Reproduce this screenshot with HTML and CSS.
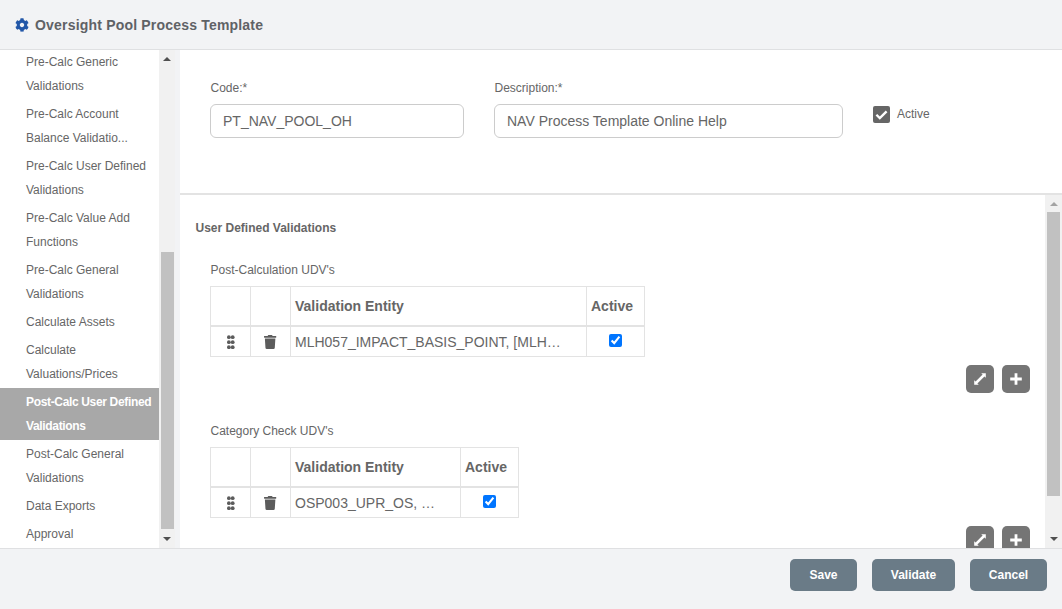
FILE: index.html
```html
<!DOCTYPE html>
<html lang="en">
<head>
<meta charset="utf-8">
<title>Oversight Pool Process Template</title>
<link rel="stylesheet" href="styles.css">
</head>
<body>
<div class="app">
  <header class="header">
    <svg class="gear" viewBox="0 0 512 512"><path d="M487.4 315.7l-42.6-24.6c4.3-23.2 4.3-47 0-70.2l42.6-24.6c4.9-2.8 7.1-8.6 5.5-14-11.1-35.6-30-67.8-54.7-94.6-3.8-4.1-10-5.1-14.8-2.3L380.8 110c-17.9-15.4-38.5-27.3-60.8-35.1V25.8c0-5.6-3.9-10.5-9.4-11.7-36.7-8.2-74.3-7.8-109.2 0-5.5 1.2-9.4 6.1-9.4 11.7V75c-22.2 7.9-42.8 19.8-60.8 35.1L88.7 85.5c-4.9-2.8-11-1.9-14.8 2.3-24.7 26.7-43.6 58.9-54.7 94.6-1.7 5.4.6 11.2 5.5 14L67.3 221c-4.3 23.2-4.3 47 0 70.2l-42.6 24.6c-4.9 2.8-7.1 8.6-5.5 14 11.1 35.6 30 67.8 54.7 94.6 3.8 4.1 10 5.1 14.8 2.3l42.6-24.6c17.9 15.4 38.5 27.3 60.8 35.1v49.2c0 5.6 3.9 10.5 9.4 11.7 36.7 8.2 74.3 7.8 109.2 0 5.5-1.2 9.4-6.1 9.4-11.7v-49.2c22.2-7.9 42.8-19.8 60.8-35.1l42.6 24.6c4.9 2.8 11 1.9 14.8-2.3 24.7-26.7 43.6-58.9 54.7-94.6 1.5-5.5-.7-11.3-5.6-14.1zM256 336c-44.1 0-80-35.9-80-80s35.9-80 80-80 80 35.9 80 80-35.9 80-80 80z"/></svg>
    <h1 class="title">Oversight Pool Process Template</h1>
  </header>
  <div class="middle">
    <aside class="sidebar">
      <nav class="nav">
        <ul class="nav-list">
          <li class="nav-item">Pre-Calc Generic<br>Validations</li>
          <li class="nav-item">Pre-Calc Account<br>Balance Validatio...</li>
          <li class="nav-item">Pre-Calc User Defined<br>Validations</li>
          <li class="nav-item">Pre-Calc Value Add<br>Functions</li>
          <li class="nav-item">Pre-Calc General<br>Validations</li>
          <li class="nav-item">Calculate Assets</li>
          <li class="nav-item">Calculate<br>Valuations/Prices</li>
          <li class="nav-item selected">Post-Calc User Defined<br>Validations</li>
          <li class="nav-item">Post-Calc General<br>Validations</li>
          <li class="nav-item">Data Exports</li>
          <li class="nav-item">Approval</li>
        </ul>
      </nav>
      <div class="scrollbar nav-scroll">
        <span class="arrow up dark"></span>
        <span class="thumb"></span>
        <span class="arrow down dark"></span>
      </div>
    </aside>
    <main class="main">
      <section class="form">
        <div class="field code">
          <label class="label">Code:*</label>
          <input class="input" type="text" value="PT_NAV_POOL_OH">
        </div>
        <div class="field desc">
          <label class="label">Description:*</label>
          <input class="input" type="text" value="NAV Process Template Online Help">
        </div>
        <div class="active-check">
          <span class="check-box"><svg viewBox="0 0 16 16"><path d="M3.2 8.2l3.2 3.2 6.4-6.4" fill="none" stroke="#fff" stroke-width="2.2"/></svg></span>
          <span class="active-text">Active</span>
        </div>
      </section>
      <section class="lower">
        <div class="lower-content">
          <h2 class="section-title">User Defined Validations</h2>

          <h3 class="group-title">Post-Calculation UDV's</h3>
          <table class="grid grid-a">
            <thead><tr><th class="icol"></th><th class="icol"></th><th class="entity">Validation Entity</th><th class="act">Active</th></tr></thead>
            <tbody><tr>
              <td class="ic"><svg class="drag" viewBox="0 0 7.6 14.4"><circle cx="1.9" cy="2.2" r="1.9"/><circle cx="5.7" cy="2.2" r="1.9"/><circle cx="1.9" cy="7.2" r="1.9"/><circle cx="5.7" cy="7.2" r="1.9"/><circle cx="1.9" cy="12.2" r="1.9"/><circle cx="5.7" cy="12.2" r="1.9"/></svg></td>
              <td class="ic"><svg class="trash" viewBox="0 0 448 512"><path d="M432 32H312l-9.4-18.7A24 24 0 0 0 281.1 0H166.8a23.72 23.72 0 0 0-21.4 13.3L136 32H16A16 16 0 0 0 0 48v32a16 16 0 0 0 16 16h416a16 16 0 0 0 16-16V48a16 16 0 0 0-16-16zM53.2 467a48 48 0 0 0 47.9 45h245.8a48 48 0 0 0 47.9-45L416 128H32z"/></svg></td>
              <td class="val">MLH057_IMPACT_BASIS_POINT, [MLH…</td>
              <td class="ck"><input type="checkbox" checked></td>
            </tr></tbody>
          </table>
          <div class="tools">
            <button class="tool"><svg viewBox="0 0 14 14"><path d="M8.2 1.2h4.6v4.6l-1.4-1.4-7 7 1.4 1.4H1.2V8.2l1.4 1.4 7-7z"/></svg></button>
            <button class="tool"><svg viewBox="0 0 14 14"><path d="M5.6 1.2h2.8v4.4h4.4v2.8H8.4v4.4H5.6V8.4H1.2V5.6h4.4z"/></svg></button>
          </div>

          <h3 class="group-title second">Category Check UDV's</h3>
          <table class="grid grid-b">
            <thead><tr><th class="icol"></th><th class="icol"></th><th class="entity">Validation Entity</th><th class="act">Active</th></tr></thead>
            <tbody><tr>
              <td class="ic"><svg class="drag" viewBox="0 0 7.6 14.4"><circle cx="1.9" cy="2.2" r="1.9"/><circle cx="5.7" cy="2.2" r="1.9"/><circle cx="1.9" cy="7.2" r="1.9"/><circle cx="5.7" cy="7.2" r="1.9"/><circle cx="1.9" cy="12.2" r="1.9"/><circle cx="5.7" cy="12.2" r="1.9"/></svg></td>
              <td class="ic"><svg class="trash" viewBox="0 0 448 512"><path d="M432 32H312l-9.4-18.7A24 24 0 0 0 281.1 0H166.8a23.72 23.72 0 0 0-21.4 13.3L136 32H16A16 16 0 0 0 0 48v32a16 16 0 0 0 16 16h416a16 16 0 0 0 16-16V48a16 16 0 0 0-16-16zM53.2 467a48 48 0 0 0 47.9 45h245.8a48 48 0 0 0 47.9-45L416 128H32z"/></svg></td>
              <td class="val">OSP003_UPR_OS, …</td>
              <td class="ck"><input type="checkbox" checked></td>
            </tr></tbody>
          </table>
          <div class="tools">
            <button class="tool"><svg viewBox="0 0 14 14"><path d="M8.2 1.2h4.6v4.6l-1.4-1.4-7 7 1.4 1.4H1.2V8.2l1.4 1.4 7-7z"/></svg></button>
            <button class="tool"><svg viewBox="0 0 14 14"><path d="M5.6 1.2h2.8v4.4h4.4v2.8H8.4v4.4H5.6V8.4H1.2V5.6h4.4z"/></svg></button>
          </div>
        </div>
        <div class="scrollbar main-scroll">
          <span class="arrow up light"></span>
          <span class="thumb"></span>
          <span class="arrow down dark"></span>
        </div>
      </section>
    </main>
  </div>
  <footer class="footer">
    <button class="btn">Save</button>
    <button class="btn">Validate</button>
    <button class="btn">Cancel</button>
  </footer>
</div>
</body>
</html>
```
FILE: styles.css
```css
* { box-sizing: border-box; }
html, body { margin: 0; padding: 0; height: 100%; overflow: hidden; }
body { font-family: "Liberation Sans", Arial, sans-serif; color: #666; background: #fff; }
.app { display: flex; flex-direction: column; width: 1062px; height: 609px; }

.header { flex: 0 0 50px; display: flex; align-items: center; gap: 6px; padding-left: 15px; background: #f2f3f5; border-bottom: 1px solid #dfe0e2; }
.gear { width: 14px; height: 14px; fill: #2257a8; }
.title { margin: 0; font-size: 14px; font-weight: 700; color: #5f6266; letter-spacing: .19px; }

.middle { flex: 1; display: flex; min-height: 0; }
.sidebar { flex: 0 0 180px; display: flex; background: #f2f3f5; padding-right: 5px; }
.nav { width: 159px; background: #fff; overflow: hidden; }
.nav-list { list-style: none; margin: -2px 0 0; padding: 0; }
.nav-item { padding: 2px 0 2px 26px; font-size: 12px; line-height: 24px; color: #666; white-space: nowrap; }
.nav-item.selected { background: #a8a8a8; color: #fff; font-weight: 700; letter-spacing: -.34px; }

.scrollbar { flex: 0 0 auto; display: flex; flex-direction: column; align-items: center; background: #f1f1f1; position: relative; }
.nav-scroll { width: 16px; }
.main-scroll { width: 17px; }
.thumb { display: block; background: #c1c1c1; }
.nav-scroll .thumb { width: 13px; height: 277px; margin-top: 191px; }
.main-scroll .thumb { width: 13px; height: 284px; margin-top: 6px; }
.arrow { display: block; width: 0; height: 0; border-left: 4px solid transparent; border-right: 4px solid transparent; }
.arrow.up { margin-top: 7px; border-bottom: 4px solid #505050; }
.arrow.up.light { border-bottom-color: #a3a3a3; }
.arrow.down { position: absolute; bottom: 7px; border-top: 4px solid #505050; }

.main { flex: 1; min-width: 0; display: flex; flex-direction: column; }
.form { flex: 0 0 145px; display: flex; align-items: flex-start; gap: 30px; padding: 30px 0 0 30px; border-bottom: 2px solid #e3e3e3; }
.field { display: flex; flex-direction: column; }
.field.code { width: 254px; }
.field.desc { width: 349px; }
.label { font-size: 12px; line-height: 16px; margin-bottom: 8px; padding-left: .5px; color: #666; }
.input { height: 34px; width: 100%; padding: 0 12px; border: 1px solid #ccc; border-radius: 6px; font: 14px "Liberation Sans", Arial, sans-serif; color: #666; background: #fff; outline: none; }
.active-check { display: flex; align-items: flex-start; gap: 7px; margin-top: 26px; font-size: 12px; line-height: 16px; color: #666; }
.check-box { display: block; width: 17px; height: 17px; border-radius: 2px; background: #666; }
.check-box svg { display: block; width: 17px; height: 17px; }

.lower { flex: 1; min-height: 0; display: flex; }
.lower-content { flex: 1; min-width: 0; overflow: hidden; padding: 25px 15px 0 15px; }
.section-title { margin: 0 0 26px; padding-left: .5px; font-size: 12px; line-height: 16px; font-weight: 700; color: #666; }
.group-title { margin: 0 0 8px 15px; padding-left: .5px; font-size: 12px; line-height: 16px; font-weight: 400; color: #666; }
.group-title.second { margin-top: 30px; }

.grid { margin-left: 15px; border-collapse: collapse; table-layout: fixed; font-size: 14px; }
.grid-a { width: 435px; }
.grid-b { width: 309px; }
.grid th, .grid td { border: 1px solid #e3e3e3; padding: 0; }
.grid th { height: 39px; border-bottom: 2px solid #e3e3e3; font-weight: 700; color: #666; text-align: left; }
.grid td { height: 31px; }
.icol { width: 40px; }
.grid-a .entity { width: 296px; }
.grid-b .entity { width: 170px; }
.grid th.entity, .grid th.act { padding-left: 4px; }
.grid td.val { padding: 2px 0 0 4px; color: #666; white-space: nowrap; }
.grid td.ic:first-child { padding-left: 1px; }
.ic, .ck { text-align: center; }
.ic svg { display: block; margin: 1px auto 0; fill: #5c5c5c; }
.drag { width: 7.6px; height: 14.4px; }
.trash { width: 12.25px; height: 14px; }
.ck input { display: block; margin: 0 auto 2px; width: 13px; height: 13px; }

.tools { display: flex; justify-content: flex-end; gap: 8px; margin-top: 8px; padding-right: 0; }
.tool { width: 28px; height: 28px; padding: 0; border: 0; border-radius: 5px; background: #757575; display: flex; align-items: center; justify-content: center; }
.tool svg { width: 14px; height: 14px; fill: #fff; }

.footer { flex: 0 0 61px; display: flex; justify-content: flex-end; align-items: flex-start; gap: 15px; padding: 10px 15px 0 0; background: #f2f3f5; border-top: 1px solid #dfe0e2; }
.btn { height: 32px; border: 0; border-radius: 5px; background: #6a7b87; color: #fff; font: 700 12px "Liberation Sans", Arial, sans-serif; }
.btn:nth-child(1) { width: 67px; }
.btn:nth-child(2) { width: 83px; }
.btn:nth-child(3) { width: 77px; }
```
